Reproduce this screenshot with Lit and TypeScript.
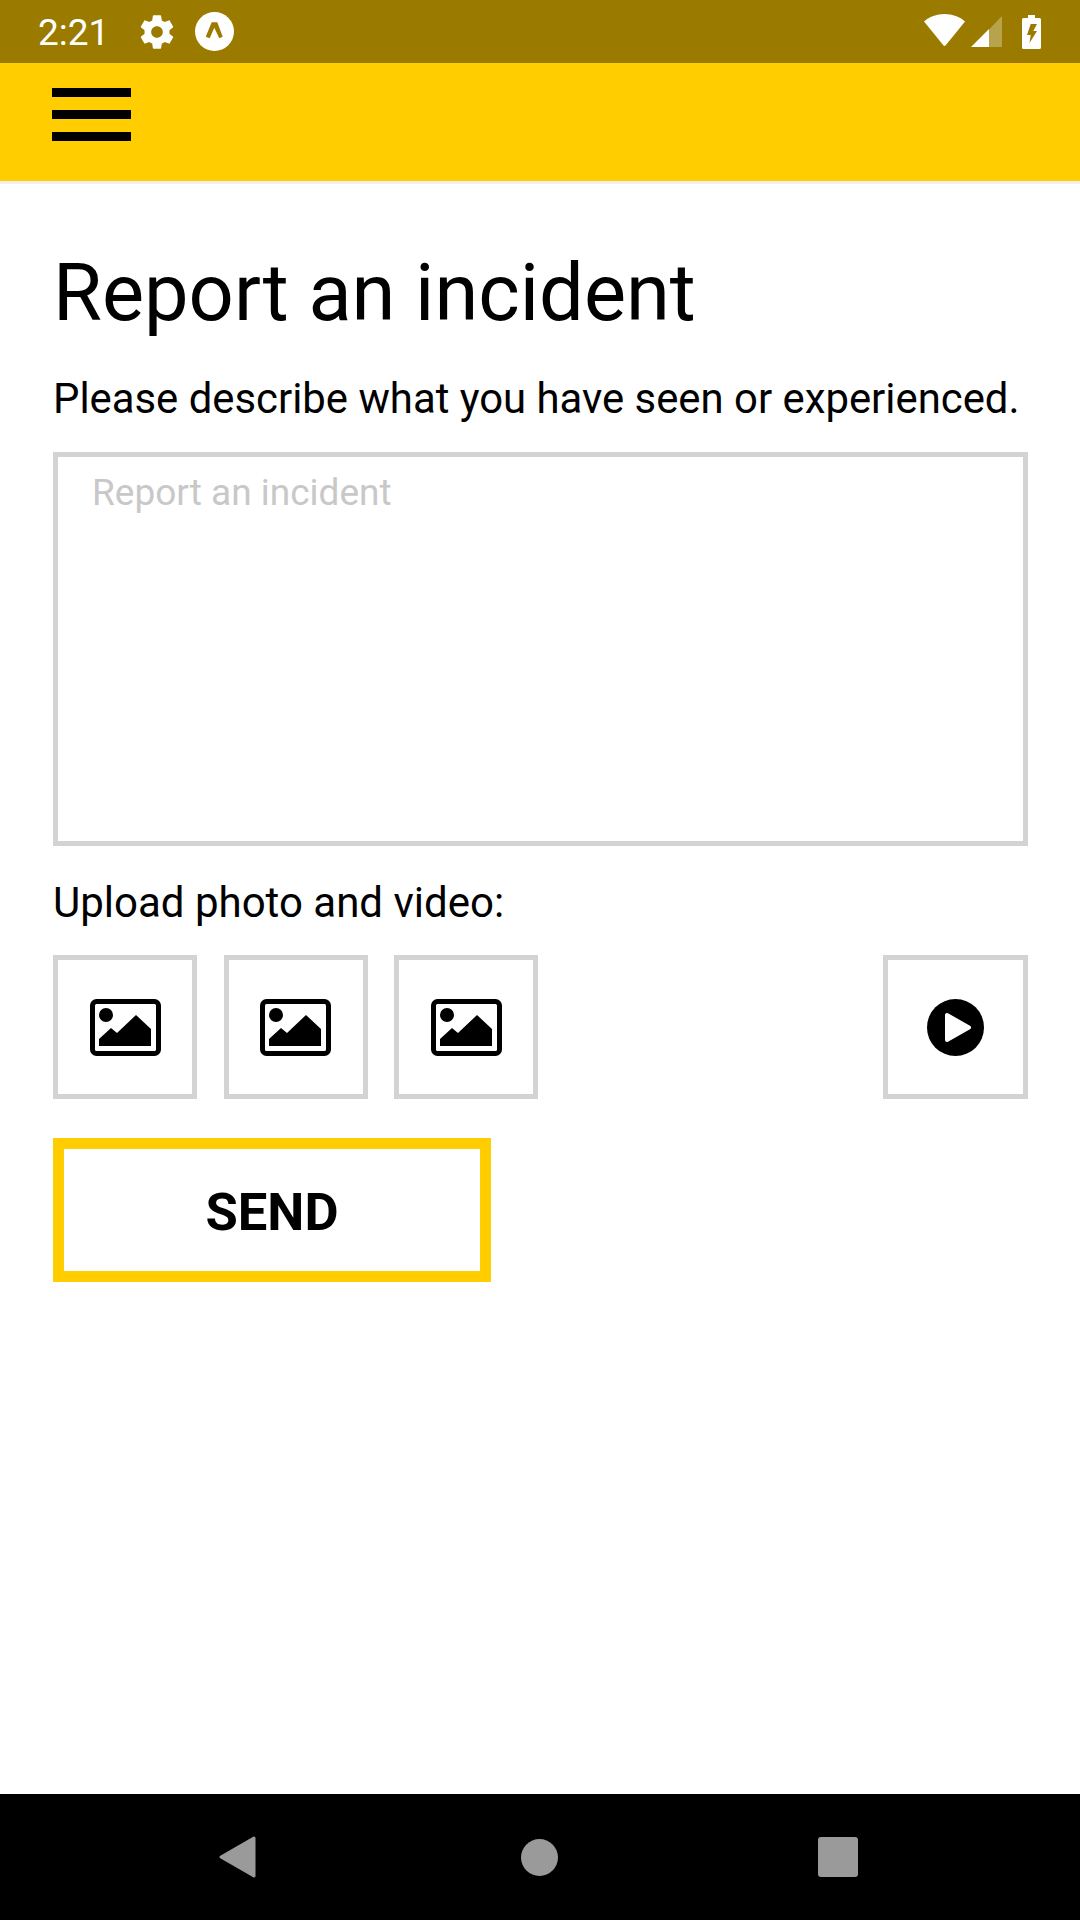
import { css, html, LitElement, svg } from 'lit';
import { customElement } from 'lit/decorators.js';

const imageIcon = svg`
  <rect x="2.5" y="2.5" width="66" height="52" rx="4" fill="none" stroke="#000" stroke-width="5" />
  <circle cx="16" cy="16" r="7" />
  <path d="M9 47V40L21 29L27 34L46 16L61 30V47Z" />
`;

@customElement('app-root')
export class AppRoot extends LitElement {
  private renderStatusBar() {
    return html`<div class="status">
      <span class="time">2:21</span>
      <svg class="gear" viewBox="0 0 24 24" fill="#fff">
        <path
          d="M19.43 12.98c.04-.32.07-.64.07-.98s-.03-.66-.07-.98l2.11-1.65c.19-.15.24-.42.12-.64l-2-3.46c-.12-.22-.39-.3-.61-.22l-2.49 1c-.52-.4-1.08-.73-1.69-.98l-.38-2.65C14.46 2.18 14.25 2 14 2h-4c-.25 0-.46.18-.49.42l-.38 2.65c-.61.25-1.17.59-1.69.98l-2.49-1c-.23-.09-.49 0-.61.22l-2 3.46c-.13.22-.07.49.12.64l2.11 1.65c-.04.32-.07.65-.07.98s.03.66.07.98l-2.11 1.65c-.19.15-.24.42-.12.64l2 3.46c.12.22.39.3.61.22l2.49-1c.52.4 1.08.73 1.69.98l.38 2.65c.03.24.24.42.49.42h4c.25 0 .46-.18.49-.42l.38-2.65c.61-.25 1.17-.59 1.69-.98l2.49 1c.23.09.49 0 .61-.22l2-3.46c.12-.22.07-.49-.12-.64l-2.11-1.65zM12 15.5c-1.93 0-3.5-1.57-3.5-3.5s1.57-3.5 3.5-3.5 3.5 1.57 3.5 3.5-1.57 3.5-3.5 3.5z"
        />
      </svg>
      <svg class="expo" viewBox="0 0 39 39">
        <circle cx="19.5" cy="19.5" r="19.5" fill="#fff" />
        <path d="M16.7 10.3H22.3L27.7 24.7L24.3 26.3L19.3 15.7L14.7 26.3L10.7 24.7Z" fill="#9a7b00" />
      </svg>
      <div class="spacer"></div>
      <svg class="wifi" viewBox="0 0 41 32" fill="#fff">
        <path d="M0 7.5C5.5 2.8 12.5 0 20.5 0S35.5 2.8 41 7.5L21.5 31.5Q20.5 32.4 19.5 31.5Z" />
      </svg>
      <svg class="signal" viewBox="0 0 31 31" fill="#fff">
        <path d="M18 13.5L31 0V31H18Z" fill-opacity="0.3" />
        <path d="M0 31L18 13V31Z" />
      </svg>
      <svg class="battery" viewBox="0 0 19 34">
        <path
          fill="#fff"
          fill-rule="evenodd"
          d="M6 0H13V3H17.5Q19 3 19 4.5V32.5Q19 34 17.5 34H1.5Q0 34 0 32.5V4.5Q0 3 1.5 3H6ZM8.7 9L5 20H8.7L7.5 28L15 16H11.3L15 9Z"
        />
      </svg>
    </div>`;
  }

  protected render() {
    const boxes = [0, 1, 2];

    return html`
      ${this.renderStatusBar()}
      <header class="toolbar">
        <div class="menu"><span></span><span></span><span></span></div>
      </header>
      <main class="content">
        <h1>Report an incident</h1>
        <p class="lead">Please describe what you have seen or experienced.</p>
        <textarea class="report" placeholder="Report an incident"></textarea>
        <p class="upload">Upload photo and video:</p>
        <div class="media">
          ${boxes.map(
            () => html`<div class="box">
              <svg class="image-icon" viewBox="0 0 71 57">${imageIcon}</svg>
            </div>`,
          )}
          <div class="spacer"></div>
          <div class="box video">
            <svg class="play-icon" viewBox="0 0 57 57">
              <circle cx="28.5" cy="28.5" r="28.5" />
              <path d="M20 16V41L42 28.5Z" fill="#fff" stroke="#fff" stroke-width="4" stroke-linejoin="round" />
            </svg>
          </div>
        </div>
        <button class="send">SEND</button>
      </main>
      <nav class="nav">
        <svg class="back" viewBox="0 0 37 42">
          <path d="M35 2L2 21L35 40Z" fill="#9a9a9a" stroke="#9a9a9a" stroke-width="3" stroke-linejoin="round" />
        </svg>
        <div class="home"></div>
        <div class="recent"></div>
      </nav>
    `;
  }

  static styles = css`
    :host {
      display: flex;
      flex-direction: column;
      width: 1080px;
      height: 1920px;
      background: #fff;
      color: #000;
      font-family: Roboto, sans-serif;
    }

    .status {
      display: flex;
      align-items: center;
      flex: none;
      box-sizing: border-box;
      height: 63px;
      padding: 0 39px 0 38px;
      background: #9a7b00;
      color: #fff;
    }

    .time {
      width: 67px;
      padding-top: 2px;
      font-size: 37px;
      line-height: 61px;
    }

    .gear {
      width: 40px;
      height: 40px;
      margin-left: 32px;
    }

    .expo {
      width: 39px;
      height: 39px;
      margin-left: 18px;
    }

    .spacer {
      flex: 1;
    }

    .wifi {
      width: 41px;
      height: 32px;
      margin-top: -3px;
    }

    .signal {
      width: 31px;
      height: 31px;
      margin-left: 6px;
    }

    .battery {
      width: 19px;
      height: 34px;
      margin-left: 20px;
    }

    .toolbar {
      flex: none;
      box-sizing: border-box;
      height: 121px;
      padding: 25px 0 0 52px;
      background: #ffcd00;
      border-bottom: 3px solid #f0f0f0;
    }

    .menu {
      display: flex;
      flex-direction: column;
      gap: 13px;
      width: 79px;
    }

    .menu span {
      display: block;
      height: 9px;
      background: #000;
    }

    .content {
      display: flex;
      flex-direction: column;
      flex: 1;
      padding: 0 52px 0 53px;
    }

    h1 {
      margin: 64px 0 0 0;
      font-size: 79.4px;
      line-height: 90px;
      font-weight: 400;
    }

    .lead {
      margin: 37px 0 0 0;
      font-size: 41.85px;
      line-height: 48px;
    }

    .report {
      box-sizing: border-box;
      display: block;
      width: 975px;
      height: 394px;
      margin-top: 29px;
      padding: 15px 34px;
      border: 5px solid #d3d3d3;
      border-radius: 0;
      outline: none;
      resize: none;
      font-family: Roboto, sans-serif;
      font-size: 37px;
      line-height: 42px;
    }

    .report::placeholder {
      color: #c8c8c8;
      opacity: 1;
    }

    .upload {
      margin: 34px 0 0 0;
      font-size: 42px;
      line-height: 45px;
    }

    .media {
      display: flex;
      gap: 26.5px;
      margin-top: 30px;
    }

    .box {
      box-sizing: border-box;
      display: flex;
      align-items: center;
      justify-content: center;
      width: 144px;
      height: 144px;
      border: 5px solid #d3d3d3;
    }

    .video {
      width: 145px;
    }

    .image-icon {
      width: 71px;
      height: 57px;
    }

    .play-icon {
      width: 57px;
      height: 57px;
    }

    .send {
      box-sizing: border-box;
      width: 438px;
      height: 144px;
      margin-top: 39px;
      padding: 4px 0 0;
      border: 11px solid #ffcd00;
      border-radius: 0;
      background: #fff;
      color: #000;
      font-family: Roboto, sans-serif;
      font-size: 52.5px;
      font-weight: 700;
    }

    .nav {
      display: flex;
      align-items: center;
      flex: none;
      box-sizing: border-box;
      height: 126px;
      padding-left: 219px;
      background: #000;
    }

    .back {
      width: 37px;
      height: 42px;
    }

    .home {
      width: 37px;
      height: 37px;
      margin-left: 265px;
      border-radius: 50%;
      background: #9a9a9a;
    }

    .recent {
      width: 40px;
      height: 40px;
      margin-left: 260px;
      border-radius: 3px;
      background: #9a9a9a;
    }
  `;
}

declare global {
  interface HTMLElementTagNameMap {
    'app-root': AppRoot;
  }
}
